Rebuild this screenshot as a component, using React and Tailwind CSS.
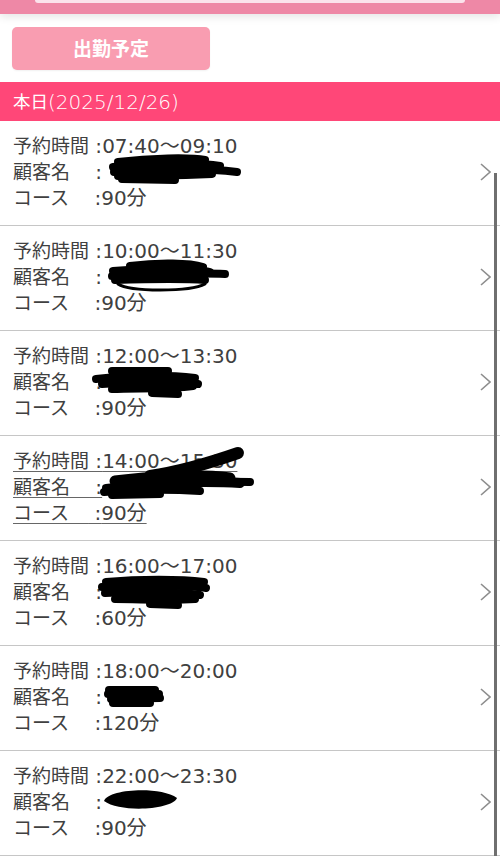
const reservations = [
  { time: '07:40〜09:10', course: '90分', marks: [
    'M118 41 C150 37 190 36 205 39',
    'M113 46 C150 42 200 41 220 45',
    'M114 51 C160 48 205 47 237 51',
    'M118 55 C150 55 185 54 212 53',
    'M122 58 L175 59',
  ] },
  { time: '10:00〜11:30', course: '90分', marks: [
    'M130 40 C160 36 190 37 203 41',
    'M113 45 C150 42 195 42 210 46',
    'M112 50 C160 48 200 47 225 48',
    'M115 54 C150 53 190 53 205 54',
  ], loop: 'M118 58 C130 66 190 66 205 58' },
  { time: '12:00〜13:30', course: '90分', marks: [
    'M112 40 L168 40',
    'M96 48 C130 44 170 44 195 47',
    'M102 53 C140 50 180 50 198 53',
    'M112 58 C140 57 170 58 193 55',
    'M152 62 L178 63',
  ] },
  { time: '14:00〜15:30', course: '90分', underline: true, big: true, marks: [
    'M106 52 C150 47 210 45 250 46',
    'M104 56 C140 53 170 53 200 55',
    'M112 59 L160 58',
  ] },
  { time: '16:00〜17:00', course: '60分', marks: [
    'M106 41 C140 38 180 38 204 41',
    'M102 46 C140 44 185 44 206 47',
    'M105 52 C140 50 180 51 200 54',
    'M115 58 C140 58 170 60 195 58',
    'M150 63 L178 64',
  ] },
  { time: '18:00〜20:00', course: '120分', marks: [
    'M109 44 L155 44',
    'M108 48 L159 48',
    'M111 53 L160 52',
    'M113 57 L150 57',
  ] },
  { time: '22:00〜23:30', course: '90分', blob: 'M104 50 C108 38 160 35 177 47 C172 59 120 62 104 50 Z', marks: [] },
];

function Line({ label, value, underline }) {
  return (
    <div className={underline ? 'underline decoration-[#666] decoration-1 underline-offset-[3px]' : ''}>
      <span className="text-[19px]">{label}</span>
      {' :'}
      {value}
    </div>
  );
}

function Scribble({ r }) {
  return (
    <svg className="absolute inset-0 pointer-events-none" width="500" height="105" viewBox="0 0 500 105">
      <g fill="none" stroke="#000" strokeWidth="8" strokeLinecap="round">
        {r.marks.map((d, i) => <path key={i} d={d} />)}
        {r.loop && <path d={r.loop} strokeWidth="3" />}
        {r.big && (
          <>
            <path d="M150 40 C185 35 215 25 238 17" strokeWidth="12" />
            <path d="M115 45 C150 40 200 38 230 42" strokeWidth="11" />
            <path d="M120 50 C160 46 210 45 240 47" strokeWidth="10" />
          </>
        )}
      </g>
      {r.blob && <path d={r.blob} fill="#000" />}
    </svg>
  );
}

export default function App() {
  return (
    <div className="relative h-[856px] overflow-hidden bg-white text-[#404040]" style={{ fontFamily: '"DejaVu Sans", "Noto Sans CJK JP", sans-serif' }}>
      <div className="h-[14px] bg-[#ee88a6] shadow-[0_3px_8px_rgba(0,0,0,0.10)]">
        <div className="mx-[35px] h-[3px] rounded-b-[8px] bg-[#fbe3ec]" />
      </div>

      <div className="px-[12px] pt-[13px] pb-[12px]">
        <button className="flex h-[43px] w-[198px] items-center justify-center rounded-[5px] bg-[#f99db1] text-[19px] font-bold text-white shadow-[0_1px_2px_rgba(0,0,0,0.06)]" style={{ fontFamily: '"Noto Sans CJK JP", sans-serif' }}>
          出勤予定
        </button>
      </div>

      <div className="flex h-[39px] items-center bg-[#ff4778] px-[13px] text-white">
        <span className="text-[17.5px]" style={{ fontFamily: '"Noto Sans CJK JP", sans-serif' }}>本日</span>
        <span className="text-[20px] font-light">(2025/12/26)</span>
      </div>

      {reservations.map((r, i) => (
        <div key={i} className="relative flex h-[105px] items-center justify-between border-b border-[#c6c6c6] pr-[9px] pl-[13px]">
          <div className="pb-[2px] text-[20px] leading-[26px]">
            <Line label="予約時間" value={r.time} underline={r.underline} />
            <Line label="顧客名　" value="" underline={r.underline} />
            <Line label="コース　" value={r.course} underline={r.underline} />
          </div>
          <svg width="11" height="18" viewBox="0 0 11 18" className="mt-[-3px]">
            <polyline points="1,1 10,9 1,17" fill="none" stroke="#8e8e8e" strokeWidth="1.6" />
          </svg>
          <Scribble r={r} />
        </div>
      ))}

      <div className="absolute right-[3px] top-[173px] bottom-0 w-[3px] bg-[#6f6f6f]" />
    </div>
  );
}
